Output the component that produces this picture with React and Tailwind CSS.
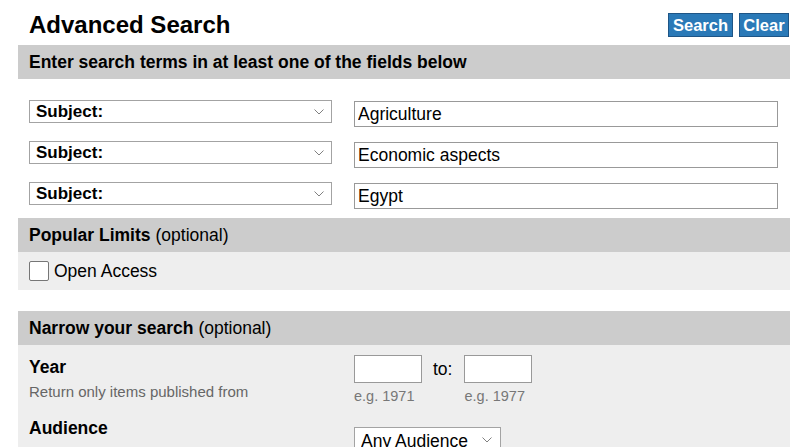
import React from 'react';

const SUBJECT_ROWS = ['Agriculture', 'Economic aspects', 'Egypt'];

const Chevron = ({ className = '' }) => (
    <svg width="10" height="6" viewBox="0 0 10 6" className={className} fill="none">
        <path d="M0.5 0.5 L5 5 L9.5 0.5" stroke="#808080" strokeWidth="1" />
    </svg>
);

const FieldSelect = ({ label }) => (
    <div className="relative w-[303px] h-[23px] shrink-0">
        <select
            defaultValue={label}
            className="appearance-none w-full h-full bg-white border border-[#a3a3a3] pl-[6px] text-[17px] font-bold text-black leading-none outline-none"
        >
            <option>{label}</option>
        </select>
        <Chevron className="absolute right-[8px] top-[9px] pointer-events-none" />
    </div>
);

const Bar = ({ title, note }) => (
    <div className="h-[34px] bg-[#cccccc] flex items-center px-[11px] text-[17.5px]">
        <span className="font-bold">{title}</span>
        {note && <span className="ml-[5px]">{note}</span>}
    </div>
);

export default function App() {
    return (
        <div className="min-h-[447px] bg-white text-black font-['Liberation_Sans',Arial,sans-serif] overflow-hidden">
            <div className="ml-[18px] w-[772px]">
                {/* Title + actions */}
                <div className="h-[45px] flex items-start justify-between">
                    <h1 className="mt-[11px] ml-[11px] text-[24px] leading-[28px] font-bold">Advanced Search</h1>
                    <div className="mt-[13px] mr-[1px] flex gap-[6px]">
                        <button className="w-[65px] h-[24px] bg-[#2a79b7] border border-[#1e5586] text-white font-bold text-[16.5px] leading-none">Search</button>
                        <button className="w-[50px] h-[24px] bg-[#2a79b7] border border-[#1e5586] text-white font-bold text-[16.5px] leading-none">Clear</button>
                    </div>
                </div>

                <Bar title="Enter search terms in at least one of the fields below" />

                <div className="pt-[21px] pb-[9px] px-[11px] flex flex-col gap-[14px]">
                    {SUBJECT_ROWS.map((term) => (
                        <div key={term} className="flex items-start h-[27px]">
                            <FieldSelect label="Subject:" />
                            <input
                                defaultValue={term}
                                className="ml-[22px] mt-[1px] w-[424px] h-[26px] bg-white border border-[#999999] px-[3px] text-[17.5px] text-black outline-none"
                            />
                        </div>
                    ))}
                </div>

                <Bar title="Popular Limits" note="(optional)" />
                <div className="h-[38px] bg-[#eeeeee] flex items-center px-[11px]">
                    <span className="w-[20px] h-[20px] bg-white border border-[#767676] rounded-[2px]" />
                    <span className="ml-[5px] text-[17.5px] mt-[1px]">Open Access</span>
                </div>

                <div className="h-[21px]" />

                <Bar title="Narrow your search" note="(optional)" />
                <div className="bg-[#eeeeee] px-[11px] pt-[10px] pb-[20px]">
                    <div className="grid grid-cols-[325px_1fr]">
                        <div>
                            <div className="text-[17.5px] font-bold leading-[22px] mt-[1px]">Year</div>
                            <div className="text-[15px] text-[#666666] leading-[18px] mt-[5px]">Return only items published from</div>
                        </div>
                        <div className="flex">
                            <div className="flex flex-col">
                                <input className="w-[68px] h-[28px] bg-white border border-[#999999] outline-none" />
                                <span className="text-[14.5px] text-[#777777] mt-[5px] leading-[16px]">e.g. 1971</span>
                            </div>
                            <span className="ml-[11px] mr-[12px] text-[17.5px] leading-[28px]">to:</span>
                            <div className="flex flex-col">
                                <input className="w-[68px] h-[28px] bg-white border border-[#999999] outline-none" />
                                <span className="text-[14.5px] text-[#777777] mt-[5px] leading-[16px]">e.g. 1977</span>
                            </div>
                        </div>

                        <div className="text-[17.5px] font-bold leading-[22px] mt-[13px]">Audience</div>
                        <div className="mt-[23px]">
                            <div className="relative w-[147px] h-[26px]">
                                <select
                                    defaultValue="Any Audience"
                                    className="appearance-none w-full h-full bg-white border border-[#a3a3a3] pl-[6px] text-[17.5px] text-black outline-none"
                                >
                                    <option>Any Audience</option>
                                </select>
                                <Chevron className="absolute right-[9px] top-[10px] pointer-events-none" />
                            </div>
                        </div>
                    </div>
                </div>
            </div>
        </div>
    );
}
